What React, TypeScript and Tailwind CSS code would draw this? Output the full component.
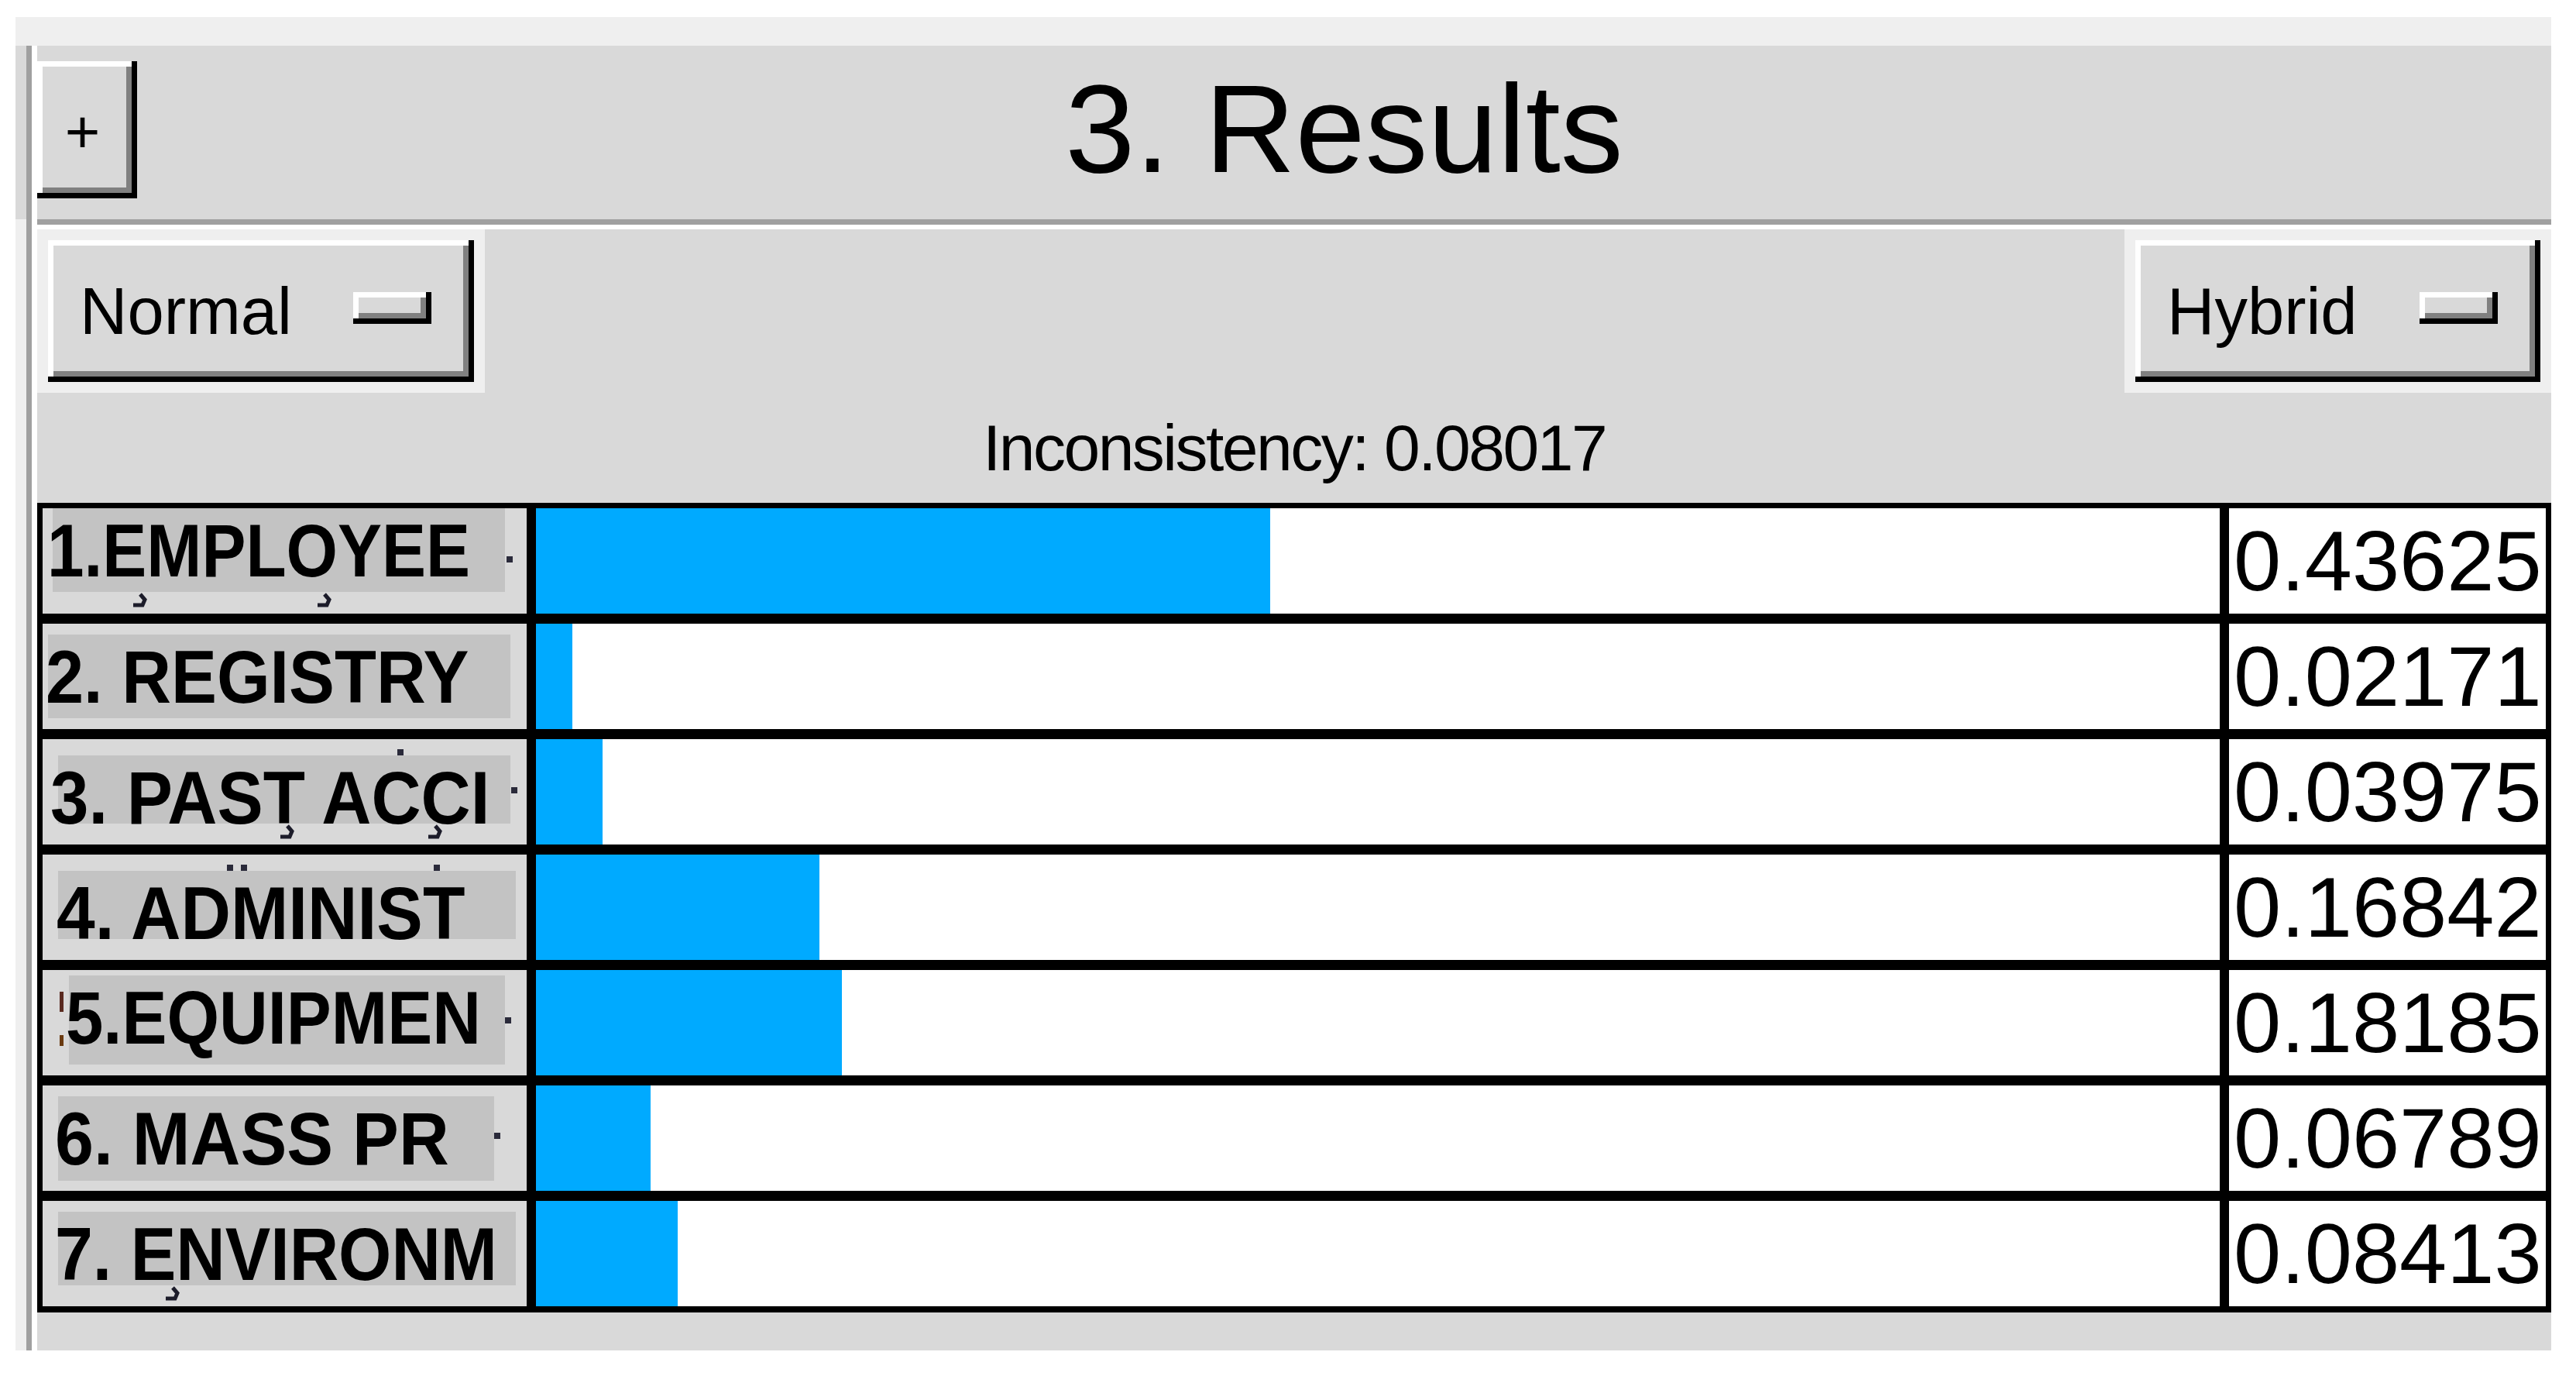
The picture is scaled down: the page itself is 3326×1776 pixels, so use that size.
type MarkKind = 'hook' | 'dot' | 'dots' | 'colon';

interface Mark {
  kind: MarkKind;
  pos: string;
}

interface ResultRow {
  label: string;
  value: number;
  box: string; // darker label box inside the cell
  text: string; // text nudge + squeeze inside the box
  marks: Mark[];
}

const rows: ResultRow[] = [
  {
    label: '1.EMPLOYEE',
    value: 0.43625,
    box: 'mt-0 ml-[13px] w-[584px] h-[108px]',
    text: 'ml-[-7px] scale-x-[0.89]',
    marks: [
      { kind: 'hook', pos: 'left-[112px] top-[108px]' },
      { kind: 'hook', pos: 'left-[350px] top-[108px]' },
      { kind: 'dot', pos: 'left-[599px] top-[62px]' },
    ],
  },
  {
    label: '2. REGISTRY',
    value: 0.02171,
    box: 'mt-[14px] ml-[7px] w-[597px] h-[108px]',
    text: 'ml-[-3px] scale-x-[0.92]',
    marks: [],
  },
  {
    label: '3. PAST ACCI',
    value: 0.03975,
    box: 'mt-[21px] ml-[20px] w-[584px] h-[88px]',
    text: 'ml-[-10px] scale-x-[0.925]',
    marks: [
      { kind: 'dot', pos: 'left-[458px] top-[13px]' },
      { kind: 'hook', pos: 'left-[302px] top-[109px]' },
      { kind: 'hook', pos: 'left-[493px] top-[109px]' },
      { kind: 'dot', pos: 'left-[605px] top-[62px]' },
    ],
  },
  {
    label: '4. ADMINIST',
    value: 0.16842,
    box: 'mt-[21px] ml-[20px] w-[591px] h-[88px]',
    text: 'ml-[-2px] scale-x-[0.93]',
    marks: [
      { kind: 'dots', pos: 'left-[238px] top-[13px]' },
      { kind: 'dot', pos: 'left-[505px] top-[13px]' },
    ],
  },
  {
    label: '5.EQUIPMEN',
    value: 0.18185,
    box: 'mt-[7px] ml-[34px] w-[563px] h-[115px]',
    text: 'ml-[-4px] scale-x-[0.905]',
    marks: [
      { kind: 'colon', pos: 'left-[22px] top-[28px]' },
      { kind: 'dot', pos: 'left-[597px] top-[61px]' },
    ],
  },
  {
    label: '6. MASS PR',
    value: 0.06789,
    box: 'mt-[14px] ml-[20px] w-[563px] h-[109px]',
    text: 'ml-[-4px] scale-x-[0.935]',
    marks: [{ kind: 'dot', pos: 'left-[583px] top-[61px]' }],
  },
  {
    label: '7. ENVIRONM',
    value: 0.08413,
    box: 'mt-[14px] ml-[20px] w-[591px] h-[95px]',
    text: 'ml-[-4px] scale-x-[0.915]',
    marks: [{ kind: 'hook', pos: 'left-[154px] top-[109px]' }],
  },
];

// classic Tk raised relief: black/white outer, grey inner shadow
const raised =
  'shadow-[inset_-7px_-7px_0_#000,inset_7px_7px_0_#fff,inset_-14px_-14px_0_#808080]';

function GlyphMark({ kind, pos }: Mark) {
  if (kind === 'hook') {
    return (
      <svg className={`absolute ${pos}`} width="26" height="22" viewBox="0 0 26 22">
        <polyline points="14,3 20,10 17,17 5,17" fill="none" stroke="#1c1c2a" strokeWidth="5" />
      </svg>
    );
  }
  if (kind === 'dots') {
    return (
      <div className={`absolute ${pos} flex gap-[10px]`}>
        <div className="w-[8px] h-[8px] bg-[#2a2a3a]" />
        <div className="w-[8px] h-[8px] bg-[#2a2a3a]" />
      </div>
    );
  }
  if (kind === 'colon') {
    return (
      <div className={`absolute ${pos} flex flex-col gap-[30px]`}>
        <div className="w-[5px] h-[26px] bg-[#5a2a20]" />
        <div className="w-[5px] h-[14px] bg-[#6a3a10]" />
      </div>
    );
  }
  return <div className={`absolute ${pos} w-[8px] h-[8px] bg-[#2a2a3a]`} />;
}

function DropButton({ label, width }: { label: string; width: string }) {
  return (
    <div className="p-[14px] bg-[#efefef]">
      <div
        className={`${width} h-[183px] bg-[#d9d9d9] ${raised} flex items-center justify-between pl-[41px] pr-[55px]`}
      >
        <span className="text-[85px] leading-none text-black">{label}</span>
        <div className={`w-[101px] h-[41px] bg-[#d9d9d9] ${raised} mb-[8px]`} />
      </div>
    </div>
  );
}

export default function App() {
  return (
    <div className="w-[3326px] h-[1776px] bg-white pt-[22px] pl-[20px] font-['Liberation_Sans',Arial,sans-serif] text-black">
      <div className="w-[3274px] h-[1721px] bg-[#efefef] flex flex-col">
        {/* top band */}
        <div className="h-[37px]" />

        <div className="flex-1 flex">
          {/* left gutter + sash */}
          <div className="w-[14px] flex flex-col">
            <div className="h-[224px] bg-[#d9d9d9]" />
            <div className="flex-1" />
          </div>
          <div className="w-[7px] bg-[#a0a0a0]" />
          <div className="w-[7px] bg-white" />

          <div className="w-[3246px] flex flex-col">
            {/* header */}
            <div className="h-[224px] bg-[#d9d9d9] flex items-start">
              <button className={`mt-[20px] w-[129px] h-[177px] bg-[#d9d9d9] ${raised} flex items-center justify-center pr-[12px] pt-[4px]`}>
                <span className="text-[78px] leading-none">+</span>
              </button>
              <div className="flex-1 text-center pt-[26px]">
                <h1 className="text-[162px] leading-none font-normal">3. Results</h1>
              </div>
            </div>
            <div className="h-[7px] bg-[#a0a0a0]" />
            <div className="h-[6px] bg-white" />

            {/* mode selectors */}
            <div className="h-[211px] bg-[#d9d9d9] flex justify-between">
              <DropButton label="Normal" width="w-[550px]" />
              <DropButton label="Hybrid" width="w-[523px]" />
            </div>

            <div className="h-[142px] bg-[#d9d9d9] flex items-center justify-center">
              <span className="text-[84px] leading-none tracking-[-2.5px]">Inconsistency: 0.08017</span>
            </div>

            {/* results table */}
            <div className="bg-black p-[7px] pb-[8px] flex flex-col gap-[13px]">
              {rows.map(row => (
                <div key={row.label} className="flex h-[136px] gap-[12px]">
                  <div className="relative w-[625px] bg-[#d9d9d9] overflow-hidden">
                    <div className={`${row.box} bg-[#c3c3c3]`}>
                      <div
                        className={`${row.text} origin-left pt-[7px] text-[96px] leading-none font-bold whitespace-nowrap`}
                      >
                        {row.label}
                      </div>
                    </div>
                    {row.marks.map((m, i) => (
                      <GlyphMark key={i} {...m} />
                    ))}
                  </div>
                  <div className="flex-1 bg-white">
                    <div className="h-full bg-[#00aaff]" style={{ width: `${row.value * 100}%` }} />
                  </div>
                  <div className="w-[409px] bg-white flex items-center pl-[6px]">
                    <span className="text-[110px] leading-none">{row.value.toFixed(5)}</span>
                  </div>
                </div>
              ))}
            </div>

            <div className="flex-1 bg-[#d9d9d9]" />
          </div>
        </div>
      </div>
    </div>
  );
}
